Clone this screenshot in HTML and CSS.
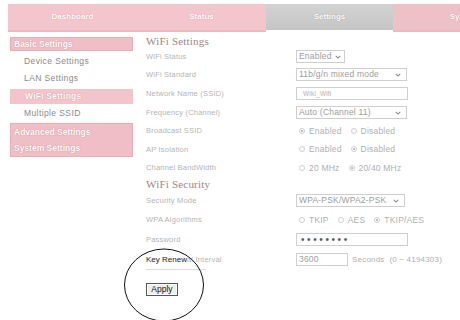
FILE: index.html
```html
<!DOCTYPE html>
<html>
<head>
<meta charset="utf-8">
<link rel="stylesheet" href="styles.css">
</head>
<body>
<div class="nav">
  <div class="tab">Dashboard</div>
  <div class="tab">Status</div>
  <div class="tab active">Settings</div>
  <div class="tab last">System</div>
</div>
<div class="page">
  <aside class="side">
    <div class="sbox basic"><div class="shead">Basic Settings</div></div>
    <div class="sitem">Device Settings</div>
    <div class="sitem">LAN Settings</div>
    <div class="sitem on"><span>WiFi Settings</span></div>
    <div class="sitem">Multiple SSID</div>
    <div class="sbox group">
      <div class="shead">Advanced Settings</div>
      <div class="shead">System Settings</div>
    </div>
  </aside>
  <main class="content">
    <h2 class="sect">WiFi Settings</h2>
    <div class="row"><div class="lbl">WiFi Status</div><div class="sel w49">Enabled<svg class="chev" viewBox="0 0 8 5"><path d="M1 1l3 3 3-3"/></svg></div></div>
    <div class="row"><div class="lbl">WiFi Standard</div><div class="sel w111">11b/g/n mixed mode<svg class="chev" viewBox="0 0 8 5"><path d="M1 1l3 3 3-3"/></svg></div></div>
    <div class="row"><div class="lbl">Network Name (SSID)</div><div class="inp w112"><span class="ssid">Wiki_Wifi</span></div></div>
    <div class="row"><div class="lbl">Frequency (Channel)</div><div class="sel w111">Auto (Channel 11)<svg class="chev" viewBox="0 0 8 5"><path d="M1 1l3 3 3-3"/></svg></div></div>
    <div class="row"><div class="lbl">Broadcast SSID</div><div class="radios"><span class="opt"><i class="rb on"></i>Enabled</span><span class="opt"><i class="rb"></i>Disabled</span></div></div>
    <div class="row"><div class="lbl">AP Isolation</div><div class="radios"><span class="opt"><i class="rb"></i>Enabled</span><span class="opt"><i class="rb on"></i>Disabled</span></div></div>
    <div class="row"><div class="lbl">Channel BandWidth</div><div class="radios"><span class="opt"><i class="rb"></i>20 MHz</span><span class="opt"><i class="rb on"></i>20/40 MHz</span></div></div>
    <h2 class="sect two">WiFi Security</h2>
    <div class="row tall"><div class="lbl">Security Mode</div><div class="sel w109">WPA-PSK/WPA2-PSK<svg class="chev" viewBox="0 0 8 5"><path d="M1 1l3 3 3-3"/></svg></div></div>
    <div class="row tall"><div class="lbl">WPA Algorithms</div><div class="radios"><span class="opt"><i class="rb"></i>TKIP</span><span class="opt"><i class="rb"></i>AES</span><span class="opt"><i class="rb on"></i>TKIP/AES</span></div></div>
    <div class="row tall"><div class="lbl">Password</div><div class="inp w112"><span class="dots">••••••••</span></div></div>
    <div class="row tall key"><div class="lbl"><span class="dark">Key Renew</span>al Interval</div><div class="inp w52"><span class="val">3600</span></div><span class="unit">Seconds&nbsp; (0 ~ 4194303)</span></div>
    <div class="actions"><button class="apply">Apply</button></div>
  </main>
</div>
<svg class="ring" viewBox="0 0 82 76"><ellipse cx="41" cy="38" rx="39.5" ry="36"/></svg>
</body>
</html>
```
FILE: styles.css
```css
* { box-sizing: border-box; }
body {
  margin: 0;
  width: 460px;
  height: 320px;
  overflow: hidden;
  background: #fff;
  font-family: "Liberation Sans", Arial, sans-serif;
  position: relative;
}
.nav {
  display: flex;
  margin: 4px 0 0 8px;
  height: 28px;
  overflow: hidden;
}
.tab {
  flex: 0 0 129px;
  height: 28px;
  background: #f3c6ce;
  border-bottom: 2px solid #edb9c3;
  color: #fff;
  font-weight: bold;
  font-size: 8px;
  display: flex;
  align-items: center;
  justify-content: center;
  padding-bottom: 1px;
  text-shadow: 0 0 1px rgba(170, 100, 110, 0.7);
}
.tab.active {
  flex-basis: 127px;
  background: linear-gradient(#d3d3d3, #c5c5c5);
  border-bottom: 2px solid #fff;
  text-shadow: 0 0 1px rgba(110, 110, 110, 0.7);
}
.tab.last { flex-basis: 142px; background: #eec0c8; }
.page { display: flex; margin-top: 3px; }
.side { flex: none; width: 123px; margin-left: 10px; }
.sbox {
  background: #f0bec7;
  border: 1px solid #e8b0bb;
}
.sbox.basic { margin-top: 2px; height: 14px; margin-bottom: 1.5px; }
.sbox.group { margin-top: 0.5px; height: 34px; }
.shead {
  height: 16px;
  line-height: 16px;
  padding-left: 3px;
  color: #fff;
  font-weight: bold;
  font-size: 8.5px;
  text-shadow: 0 0 1px rgba(170, 100, 110, 0.8);
}
.sbox.basic .shead { height: 12px; line-height: 12px; }
.sitem {
  height: 17.5px;
  line-height: 17.5px;
  padding-left: 14px;
  font-size: 8.5px;
  letter-spacing: 0.4px;
  color: #8a8a8a;
}
.sitem.on { padding: 1.5px 0; line-height: 14.5px; }
.sitem.on span {
  display: block;
  height: 14.5px;
  background: #f3c4cc;
  padding-left: 15px;
  color: #fff;
  font-weight: bold;
  text-shadow: 0 0 1px rgba(170, 100, 110, 0.8);
  letter-spacing: 0.2px;
}
.content { flex: 1; margin-left: 13px; }
.sect {
  margin: 0;
  height: 12px;
  line-height: 12px;
  font-family: "Liberation Serif", "Times New Roman", serif;
  font-weight: normal;
  font-size: 11px;
  letter-spacing: 0.2px;
  color: #a38486;
}
.sect.two { height: 13px; line-height: 15px; }
.row {
  display: flex;
  align-items: center;
  height: 18.6px;
}
.row.tall { height: 19.8px; }
.lbl {
  flex: none;
  width: 150px;
  font-size: 7.5px;
  letter-spacing: 0.2px;
  color: #b5b5b5;
}
.dark { color: #222; font-size: 8px; letter-spacing: 0; }
.sel, .inp {
  position: relative;
  height: 13px;
  border: 1px solid #cfcfcf;
  background: #fff;
  font-size: 8.5px;
  letter-spacing: 0.2px;
  color: #9d9d9d;
  padding-left: 2px;
  line-height: 11px;
}
.w49 { width: 49px; }
.w111 { width: 111px; }
.w112 { width: 112px; }
.w109 { width: 109px; }
.w52 { width: 52px; }
.chev {
  position: absolute;
  right: 5px;
  top: 4px;
  width: 6px;
  height: 4px;
  fill: none;
  stroke: #8c8c8c;
  stroke-width: 1.4;
}
.w49 .chev { right: 3px; }
.ssid { font-size: 6.5px; color: #b0b0b0; padding-left: 4px; }
.dots {
  font-size: 10px;
  letter-spacing: 2.6px;
  color: #5a5a5a;
  padding-left: 2px;
  line-height: 11px;
}
.val { color: #a0a0a0; }
.unit {
  margin-left: 4px;
  font-size: 8px;
  letter-spacing: 0.2px;
  color: #b0b0b0;
}
.radios { display: flex; gap: 9px; padding-left: 3px; }
.opt {
  display: flex;
  align-items: center;
  gap: 4px;
  font-size: 8.5px;
  letter-spacing: 0.2px;
  color: #b0b0b0;
}
.rb {
  width: 6px;
  height: 6px;
  border: 1px solid #cfcfcf;
  border-radius: 50%;
  position: relative;
}
.rb.on::after {
  content: "";
  position: absolute;
  left: 1px;
  top: 1px;
  width: 2px;
  height: 2px;
  border-radius: 50%;
  background: #a8a8a8;
}
.actions {
  border-top: 1px solid #dcdcdc;
  width: 60px;
  padding-top: 8px;
}
.apply {
  width: 32px;
  height: 13px;
  padding: 0;
  border: 1px solid #555;
  box-shadow: inset 0 0 0 1px #fff;
  background: #eeeeee;
  font-family: "Liberation Sans", Arial, sans-serif;
  font-size: 8.5px;
  color: #111;
  line-height: 10px;
}
.ring {
  position: absolute;
  left: 123px;
  top: 247px;
  width: 82px;
  height: 76px;
  fill: none;
  stroke: #111;
  stroke-width: 1;
}
```
